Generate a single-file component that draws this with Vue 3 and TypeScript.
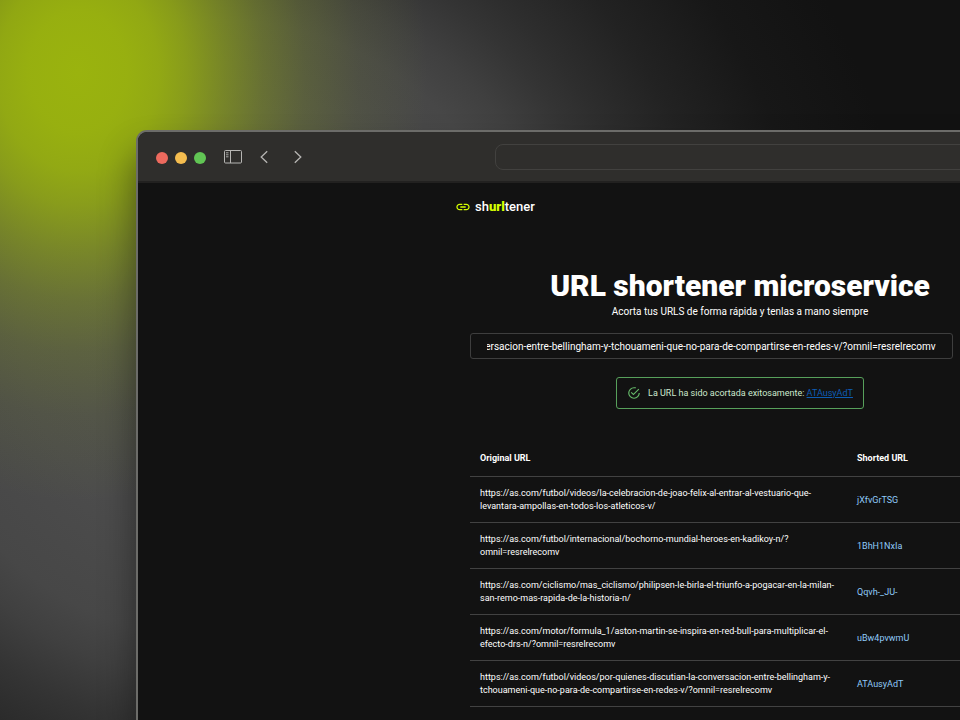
<script setup lang="ts">
import { nextTick, onMounted, ref } from 'vue'

interface ShortLink {
  original: string
  code: string
}

const links: ShortLink[] = [
  {
    original:
      'https://as.com/futbol/videos/la-celebracion-de-joao-felix-al-entrar-al-vestuario-que-levantara-ampollas-en-todos-los-atleticos-v/',
    code: 'jXfvGrTSG',
  },
  {
    original:
      'https://as.com/futbol/internacional/bochorno-mundial-heroes-en-kadikoy-n/?omnil=resrelrecomv',
    code: '1BhH1NxIa',
  },
  {
    original:
      'https://as.com/ciclismo/mas_ciclismo/philipsen-le-birla-el-triunfo-a-pogacar-en-la-milan-san-remo-mas-rapida-de-la-historia-n/',
    code: 'Qqvh-_JU-',
  },
  {
    original:
      'https://as.com/motor/formula_1/aston-martin-se-inspira-en-red-bull-para-multiplicar-el-efecto-drs-n/?omnil=resrelrecomv',
    code: 'uBw4pvwmU',
  },
  {
    original:
      'https://as.com/futbol/videos/por-quienes-discutian-la-conversacion-entre-bellingham-y-tchouameni-que-no-para-de-compartirse-en-redes-v/?omnil=resrelrecomv',
    code: 'ATAusyAdT',
  },
]

const latest = links[links.length - 1]
const url = ref(latest.original)
const urlField = ref<HTMLInputElement | null>(null)

// Keep the end of the pasted URL in view.
onMounted(async () => {
  await nextTick()
  await document.fonts.ready
  if (urlField.value) urlField.value.scrollLeft = urlField.value.scrollWidth
})
</script>

<template>
  <div class="backdrop">
    <div class="window">
      <div class="toolbar">
        <div class="tools">
          <div class="lights">
            <span class="light close"></span>
            <span class="light minimize"></span>
            <span class="light expand"></span>
          </div>
          <button class="tool" type="button" aria-label="Sidebar">
            <svg viewBox="0 0 18 14" width="18" height="14" fill="none" stroke="currentColor">
              <rect x="0.5" y="0.5" width="17" height="12.5" rx="1" />
              <path d="M6.5 0.5V13" />
              <path d="M2 2.8H4.5M2 4.8H4.5M2 6.8H4.5" stroke-width="0.9" />
            </svg>
          </button>
          <button class="tool" type="button" aria-label="Back">
            <svg viewBox="0 0 8 14" width="8" height="14" fill="none" stroke="currentColor">
              <path d="M7.2 1.2L1.2 7L7.2 12.8" stroke-width="1.3" />
            </svg>
          </button>
          <button class="tool forward" type="button" aria-label="Forward">
            <svg viewBox="0 0 8 14" width="8" height="14" fill="none" stroke="currentColor">
              <path d="M0.8 1.2L6.8 7L0.8 12.8" stroke-width="1.3" />
            </svg>
          </button>
        </div>
        <input class="address" type="text" aria-label="Address" />
      </div>

      <div class="page">
        <header class="brand">
          <svg class="brand-icon" viewBox="0 0 24 24" width="16" height="16" fill="currentColor">
            <path
              d="M3.9 12c0-1.71 1.39-3.1 3.1-3.1h4V7H7c-2.76 0-5 2.24-5 5s2.24 5 5 5h4v-1.9H7c-1.71 0-3.1-1.39-3.1-3.1zM8 13h8v-2H8v2zm9-6h-4v1.9h4c1.71 0 3.1 1.39 3.1 3.1s-1.39 3.1-3.1 3.1h-4V17h4c2.76 0 5-2.24 5-5s-2.24-5-5-5z"
            />
          </svg>
          <span class="brand-name">sh<b>url</b>tener</span>
        </header>

        <main class="content">
          <h1>URL shortener microservice</h1>
          <p class="subtitle">Acorta tus URLS de forma rápida y tenlas a mano siempre</p>

          <form class="shorten" @submit.prevent>
            <input ref="urlField" v-model="url" class="url" type="text" aria-label="URL" />
            <button class="submit" type="submit" aria-label="Acortar">
              <svg viewBox="0 0 24 24" width="16" height="16" fill="currentColor">
                <path d="M2 21L23 12L2 3V10L17 12L2 14Z" />
              </svg>
            </button>
          </form>

          <div class="alert" role="status">
            <svg viewBox="0 0 24 24" width="14" height="14" fill="currentColor">
              <path
                d="M20,12A8,8 0 0,1 12,20A8,8 0 0,1 4,12A8,8 0 0,1 12,4C12.76,4 13.5,4.11 14.2, 4.31L15.77,2.74C14.61,2.26 13.34,2 12,2A10,10 0 0,0 2,12A10,10 0 0,0 12,22A10,10 0 0, 0 22,12M7.91,10.08L6.5,11.5L11,16L21,6L19.59,4.58L11,13.17L7.91,10.08Z"
              />
            </svg>
            <p>La URL ha sido acortada exitosamente: <a :href="'#' + latest.code">{{ latest.code }}</a></p>
          </div>

          <table>
            <thead>
              <tr>
                <th class="original" scope="col">Original URL</th>
                <th scope="col">Shorted URL</th>
              </tr>
            </thead>
            <tbody>
              <tr v-for="link in links" :key="link.code">
                <td>{{ link.original }}</td>
                <td><a :href="'#' + link.code">{{ link.code }}</a></td>
              </tr>
            </tbody>
          </table>
        </main>
      </div>
    </div>
  </div>
</template>

<style>
body {
  background: #111;
}
</style>

<style scoped>
.backdrop {
  box-sizing: border-box;
  display: flex;
  height: 100vh;
  overflow: hidden;
  padding: 130px 0 0 136px;
  font-family: Roboto, 'Liberation Sans', sans-serif;
  color: #fff;
  background:
    radial-gradient(
      ellipse 350px 430px at 78px 72px,
      rgb(154 179 14) 0,
      rgb(154 179 14 / 0.97) 14%,
      rgb(154 179 14 / 0.9) 23%,
      rgb(154 179 14 / 0.78) 31%,
      rgb(154 179 14 / 0.56) 42%,
      rgb(154 179 14 / 0.36) 53%,
      rgb(154 179 14 / 0.2) 65%,
      rgb(154 179 14 / 0.08) 80%,
      rgb(154 179 14 / 0) 100%
    ),
    radial-gradient(
      circle at 220px 330px,
      #505050 0,
      #4c4c4c 200px,
      #474747 310px,
      #404040 350px,
      #343434 400px,
      #2e2e2e 430px,
      #222222 500px,
      #171717 590px,
      #121212 690px
    );
}

.window {
  box-sizing: border-box;
  flex: 1 0 auto;
  width: 100%;
  margin-right: -384px;
  display: flex;
  flex-direction: column;
  border: 2px solid #6c6c69;
  border-bottom: 0;
  border-radius: 11px 11px 0 0;
  background: #121212;
  box-shadow: 0 24px 36px #00000070;
}

.toolbar {
  box-sizing: border-box;
  display: grid;
  grid-template-columns: 1fr 490px 1fr;
  align-items: center;
  height: 51px;
  padding: 0 18px;
  border-bottom: 2px solid #222120;
  border-radius: 9px 9px 0 0;
  background: #2f2e2c;
  color: #b6b5b3;
}

.tools {
  display: flex;
  align-items: center;
}

.lights {
  display: flex;
  gap: 7px;
  padding-top: 2px;
}

.light {
  width: 12px;
  height: 12px;
  border-radius: 50%;
}

.close {
  background: #ed6a5e;
}

.minimize {
  background: #f5bd4f;
}

.expand {
  background: #61c554;
}

.tool {
  display: flex;
  margin: 0 0 0 18px;
  padding: 0;
  border: 0;
  background: none;
  color: inherit;
}

.forward {
  margin-left: 26px;
}

.address {
  box-sizing: border-box;
  width: 100%;
  height: 26px;
  margin: 0;
  padding: 0 8px;
  border: 1px solid #42413f;
  border-radius: 8px;
  background: transparent;
  color: inherit;
}

.page {
  flex: 1;
}

.brand {
  display: flex;
  align-items: center;
  gap: 4px;
  max-width: 570px;
  height: 47px;
  margin: 0 auto;
}

.brand-icon {
  color: #d4ff00;
}

.brand-name {
  font-size: 13px;
  line-height: 16px;
  font-weight: 500;
}

.brand-name b {
  font-weight: 900;
  color: #d4ff00;
}

.content {
  display: flex;
  flex-direction: column;
  align-items: center;
  max-width: 540px;
  margin: 0 auto;
  padding-top: 38px;
}

h1 {
  margin: 0;
  font-size: 30px;
  line-height: 36px;
  font-weight: 900;
}

.subtitle {
  margin: 0;
  font-size: 10px;
  line-height: 16px;
}

.shorten {
  display: flex;
  align-self: stretch;
  gap: 10px;
  margin-top: 13px;
}

.url {
  box-sizing: border-box;
  flex: 1;
  min-width: 0;
  height: 26px;
  padding: 0 16px;
  border: 1px solid #3e3e3e;
  border-radius: 3px;
  background: transparent;
  color: #fff;
  font: 10px Roboto, 'Liberation Sans', sans-serif;
}

.submit {
  display: flex;
  align-items: center;
  justify-content: center;
  width: 47px;
  padding: 0;
  border: 0;
  border-radius: 3px;
  background: #d4ff00;
  color: #121212;
}

.alert {
  box-sizing: border-box;
  display: flex;
  align-items: center;
  gap: 7px;
  height: 32px;
  margin-top: 18px;
  padding: 0 10px;
  border: 1px solid #57a05b;
  border-radius: 3px;
  color: #66bb6a;
  font-size: 9px;
}

.alert p {
  margin: 0;
  color: #cce8cd;
}

.alert a {
  color: #0d5db5;
}

table {
  width: 100%;
  margin-top: 31px;
  border-collapse: separate;
  border-spacing: 0;
  table-layout: fixed;
  font-size: 9px;
  line-height: 13px;
}

th,
td {
  padding: 10px 10px 9px;
  border-bottom: 1px solid #424242;
  text-align: left;
  font-weight: 400;
}

th {
  padding: 12px 10px 11px;
  font-weight: 700;
}

.original {
  width: 357px;
}

td a {
  color: #90caf9;
  text-decoration: none;
}
</style>
